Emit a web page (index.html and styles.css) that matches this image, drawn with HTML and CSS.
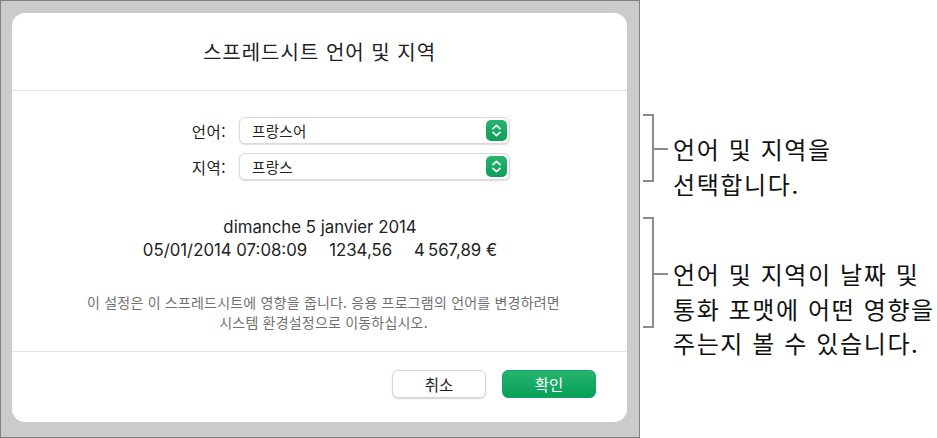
FILE: index.html
```html
<!DOCTYPE html>
<html lang="ko">
<head>
<meta charset="utf-8">
<title>스프레드시트 언어 및 지역</title>
<link rel="stylesheet" href="styles.css">
</head>
<body>
<div class="page">
  <div class="frame">
    <div class="dialog">
      <div class="dialog-header">
        <h1 class="title">스프레드시트 언어 및 지역</h1>
      </div>
      <div class="dialog-body">
        <div class="form">
          <div class="label">언어:</div>
          <div class="select">
            <span class="select-text">프랑스어</span>
            <span class="stepper"><svg width="21" height="21" viewBox="0 0 21 21"><path d="M7 8.6 L10.5 5.4 L14 8.6 M7 12.4 L10.5 15.6 L14 12.4" fill="none" stroke="#fff" stroke-width="1.7" stroke-linecap="round" stroke-linejoin="round"/></svg></span>
          </div>
          <div class="label">지역:</div>
          <div class="select">
            <span class="select-text">프랑스</span>
            <span class="stepper"><svg width="21" height="21" viewBox="0 0 21 21"><path d="M7 8.6 L10.5 5.4 L14 8.6 M7 12.4 L10.5 15.6 L14 12.4" fill="none" stroke="#fff" stroke-width="1.7" stroke-linecap="round" stroke-linejoin="round"/></svg></span>
          </div>
        </div>
        <div class="preview">
          <div class="preview-line">dimanche 5 janvier 2014</div>
          <div class="preview-line preview-row">
            <span>05/01/2014 07:08:09</span>
            <span>1234,56</span>
            <span>4&#8239;567,89 €</span>
          </div>
        </div>
        <p class="note">이 설정은 이 스프레드시트에 영향을 줍니다. 응용 프로그램의 언어를 변경하려면<br>시스템 환경설정으로 이동하십시오.</p>
      </div>
      <div class="dialog-footer">
        <button class="btn btn-cancel">취소</button>
        <button class="btn btn-ok">확인</button>
      </div>
    </div>
  </div>
  <div class="annotations">
    <div class="callout callout-1">
      <svg class="bracket" width="26" height="68" viewBox="0 0 26 68"><path d="M0 1 H10 V67 H0 M10 35 H25" fill="none" stroke="#8c8c8c" stroke-width="2"/></svg>
      <div class="callout-text callout-text-1">언어 및 지역을<br>선택합니다.</div>
    </div>
    <div class="callout callout-2">
      <svg class="bracket" width="26" height="111" viewBox="0 0 26 111"><path d="M0 1 H10 V110 H0 M10 57 H25" fill="none" stroke="#8c8c8c" stroke-width="2"/></svg>
      <div class="callout-text callout-text-2">언어 및 지역이 날짜 및<br>통화 포맷에 어떤 영향을<br>주는지 볼 수 있습니다.</div>
    </div>
  </div>
</div>
</body>
</html>
```
FILE: styles.css
```css
* { box-sizing: border-box; }
html, body { margin: 0; padding: 0; background: #fff; }
body {
  font-family: "Noto Sans CJK KR", "Noto Sans", sans-serif;
  color: #1d1d1f;
}
.page {
  display: flex;
  width: 937px;
  height: 438px;
}
.frame {
  width: 640px;
  height: 438px;
  background: #cbcbcb;
  border: 1px solid #808080;
  padding: 12px 0 0 11px;
  flex: none;
}
.dialog {
  width: 615px;
  height: 409px;
  background: #fff;
  border-radius: 13px;
  display: flex;
  flex-direction: column;
}
.dialog-header {
  height: 78px;
  border-bottom: 1px solid #e3e3e3;
  display: flex;
  align-items: center;
  justify-content: center;
  padding-top: 1px;
}
.title {
  margin: 0;
  font-size: 20px;
  font-weight: 400;
  color: #222;
  line-height: 1;
  letter-spacing: 1px;
}
.dialog-body {
  height: 261px;
  border-bottom: 1px solid #e3e3e3;
  padding-top: 26px;
  display: flex;
  flex-direction: column;
}
.form {
  display: grid;
  grid-template-columns: 214px 271px;
  column-gap: 13px;
  row-gap: 9px;
  align-items: center;
}
.label {
  text-align: right;
  font-size: 15.5px;
  color: #222;
  letter-spacing: 0.5px;
}
.select {
  height: 27px;
  border: 1px solid #dadada;
  border-radius: 6px;
  box-shadow: 0 1px 1.5px rgba(0,0,0,0.14);
  display: flex;
  align-items: center;
  justify-content: space-between;
  padding: 0 2px 0 12px;
  background: #fff;
}
.select-text {
  font-size: 14.5px;
  color: #222;
  letter-spacing: 0.3px;
}
.stepper {
  width: 21px;
  height: 21px;
  border-radius: 5px;
  background: linear-gradient(#27b46f, #0e9f5a);
  display: flex;
}
.preview {
  margin-top: 36px;
  text-align: center;
  font-family: Inter, "Noto Sans CJK KR", sans-serif;
  font-size: 16.8px;
  line-height: 23px;
  color: #222;
  padding-left: 1px;
}
.preview-row {
  display: flex;
  justify-content: center;
  gap: 22px;
}
.note {
  margin: 30px 0 0 0;
  text-align: center;
  font-size: 14px;
  line-height: 20px;
  color: #707070;
  padding-left: 8px;
  letter-spacing: 0.2px;
}
.dialog-footer {
  flex: 1;
  display: flex;
  justify-content: flex-end;
  align-items: flex-start;
  padding: 18px 31px 0 0;
  gap: 16px;
}
.btn {
  width: 94px;
  height: 28px;
  border-radius: 6px;
  font-family: "Noto Sans CJK KR", sans-serif;
  font-size: 15.5px;
  padding: 0;
  cursor: pointer;
}
.btn-cancel {
  background: #fff;
  border: 1px solid #d6d6d6;
  box-shadow: 0 1px 1.5px rgba(0,0,0,0.18);
  color: #222;
}
.btn-ok {
  background: linear-gradient(#27b46f, #07a059);
  border: 1px solid #12a661;
  color: #fff;
}
.annotations {
  flex: 1;
  padding: 114px 0 0 3px;
  display: flex;
  flex-direction: column;
}
.callout {
  display: flex;
  align-items: flex-start;
}
.callout-1 { height: 103px; }
.bracket { flex: none; display: block; }
.callout-text {
  font-size: 24px;
  line-height: 34.5px;
  color: #111;
  margin-left: 4px;
  letter-spacing: 1.6px;
  white-space: nowrap;
}
.callout-text-1 { padding-top: 18px; }
.callout-text-2 { padding-top: 40px; }
```
